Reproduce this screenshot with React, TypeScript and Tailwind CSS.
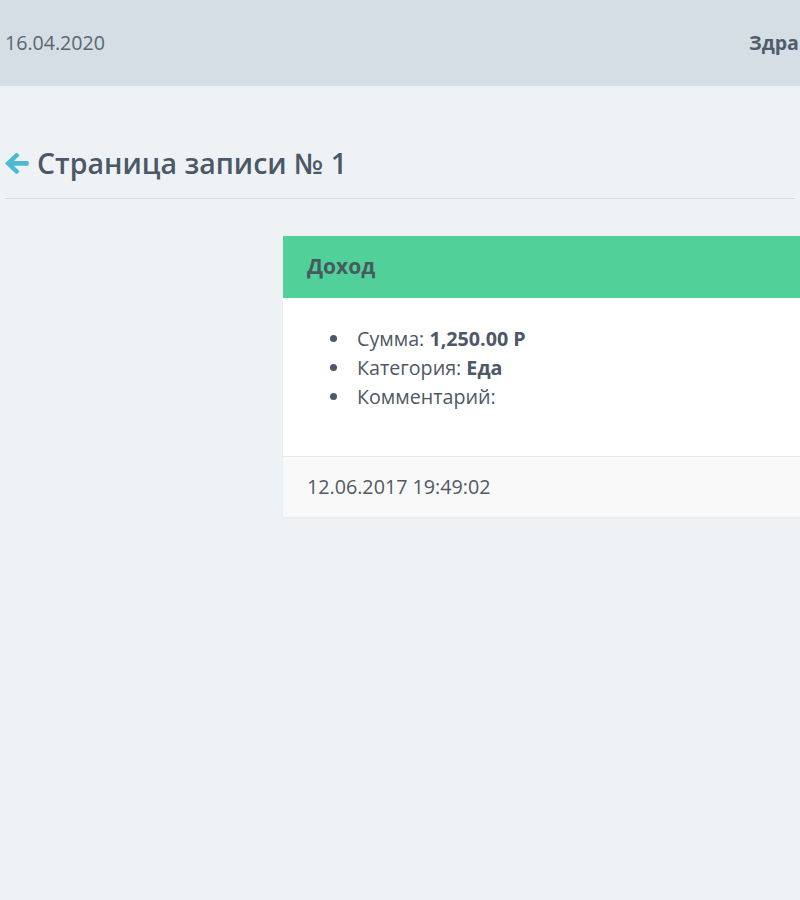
import React from 'react';

const font = { fontFamily: '"Open Sans", "Noto Sans", sans-serif' };

function ArrowLeft() {
  return (
    <svg width="24" height="25" viewBox="1.4 1.8 22.2 20.6" className="shrink-0">
      <path
        d="M11.2 2.6 L2.2 11.1 Q1.3 12 2.2 12.9 L11.2 21.4 Q12.1 22.2 13 21.4 L14.2 20.2 Q15 19.3 14.2 18.5 L9.6 14.1 H22.2 Q23.4 14.1 23.4 12.9 V11.1 Q23.4 9.9 22.2 9.9 H9.6 L14.2 5.5 Q15 4.7 14.2 3.8 L13 2.6 Q12.1 1.8 11.2 2.6 Z"
        fill="#4fb9d5"
      />
    </svg>
  );
}

export default function App() {
  return (
    <div className="min-h-[900px] w-[800px] overflow-hidden bg-[#eff2f5]" style={font}>
      <header className="flex h-[86px] items-center overflow-hidden whitespace-nowrap bg-[#d5dde5] pl-[5px] text-[19.6px] text-[#5a6672]">
        <div className="w-[744px] shrink-0">16.04.2020</div>
        <div className="font-bold text-[#4f5d6b]">Здравствуйте, Пользователь</div>
      </header>

      <div className="px-[5px] pt-[59px]">
        <div className="flex items-center gap-[8px] pb-[17px]">
          <ArrowLeft />
          <h1 className="text-[28.5px] font-semibold leading-[36px] text-[#4a5867]">Страница записи № 1</h1>
        </div>
        <div className="h-px bg-[#d6dade]" />
      </div>

      <div className="ml-[283px] mt-[37px] w-[600px] bg-white shadow-[0_1px_2px_rgba(0,0,0,0.04)]">
        <div className="flex h-[62px] items-center bg-[#52d09a] px-[24px]">
          <span className="text-[21px] font-bold text-[#475a5e]">Доход</span>
        </div>
        <ul className="list-disc pb-[45px] pl-[68px] pt-[26px] text-[19.7px] leading-[29px] text-[#4c5866] marker:text-[#4c5866]">
          <li className="pl-[6px]">
            Сумма: <b className="font-bold">1,250.00 Р</b>
          </li>
          <li className="pl-[6px]">
            Категория: <b className="font-bold">Еда</b>
          </li>
          <li className="pl-[6px]">Комментарий:</li>
        </ul>
        <div className="flex h-[61px] items-center border-t border-[#e6e6e6] bg-[#f9f9f9] px-[24px] text-[19.7px] text-[#505a64]">
          12.06.2017 19:49:02
        </div>
      </div>
    </div>
  );
}
